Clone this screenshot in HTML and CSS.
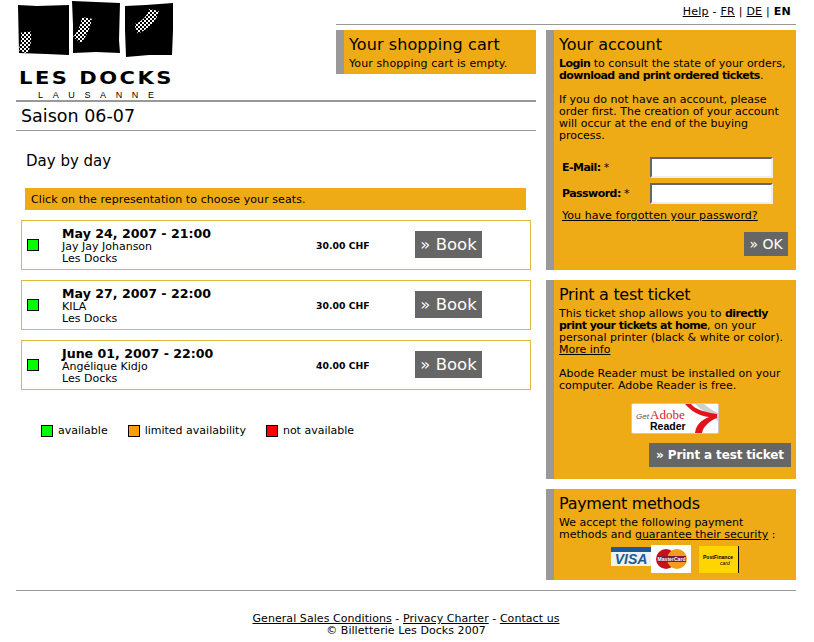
FILE: index.html
```html
<!DOCTYPE html>
<html lang="en">
<head>
  <meta charset="UTF-8" />
  <title>Billetterie Les Docks</title>
  <link rel="stylesheet" href="styles.css">
</head>
<body>
  <div class="page">
    <!-- Logo -->
    <a class="logo" href="#">
      <svg width="160" height="100" viewBox="0 0 160 100">
        <defs>
          <pattern id="dots" width="4" height="4" patternUnits="userSpaceOnUse">
            <rect width="2" height="2" fill="#fff" />
            <rect x="2" y="2" width="2" height="2" fill="#fff" />
          </pattern>
        </defs>
        <path d="M2 5 L21 6 L53 5 L53 55 L30 54 L3 53 Z" fill="#000" />
        <path d="M56 1 L80 2 L104 3 L103 40 L104 53 L80 52 L57 53 L57 25 Z" fill="#000" />
        <path d="M109 6 L130 5 L157 3 L157 30 L156 55 L133 55 L110 57 L109 30 Z" fill="#000" />
        <path d="M10 32 Q11 43 7 52" fill="none" stroke="url(#dots)" stroke-width="10" />
        <path d="M71 18 Q69 31 61 40" fill="none" stroke="url(#dots)" stroke-width="10" />
        <path d="M138 10 Q135 23 120 29" fill="none" stroke="url(#dots)" stroke-width="10" />
        <text x="3" y="84" class="logo-name" textLength="155" lengthAdjust="spacingAndGlyphs">LES DOCKS</text>
        <text x="22" y="98" class="logo-city" textLength="116">LAUSANNE</text>
      </svg>
    </a>

    <!-- Top links -->
    <div class="toplinks">
      <a href="#">Help</a> - <a href="#">FR</a> | <a href="#">DE</a> | <b>EN</b>
    </div>

    <!-- Shopping cart -->
    <div class="panel cart">
      <h2>Your shopping cart</h2>
      <p>Your shopping cart is empty.</p>
    </div>

    <!-- Main column -->
    <div class="main">
      <h1 class="season">Saison 06-07</h1>
      <h3 class="section-title">Day by day</h3>
      <div class="note">Click on the representation to choose your seats.</div>

      <div class="show">
        <span class="dot green"></span>
        <div class="show-info">
          <div class="show-date">May 24, 2007 - 21:00</div>
          Jay Jay Johanson<br>Les Docks
        </div>
        <div class="show-price">30.00 CHF</div>
        <a class="button book" href="#">» Book</a>
      </div>

      <div class="show">
        <span class="dot green"></span>
        <div class="show-info">
          <div class="show-date">May 27, 2007 - 22:00</div>
          KILA<br>Les Docks
        </div>
        <div class="show-price">30.00 CHF</div>
        <a class="button book" href="#">» Book</a>
      </div>

      <div class="show">
        <span class="dot green"></span>
        <div class="show-info">
          <div class="show-date">June 01, 2007 - 22:00</div>
          Angélique Kidjo<br>Les Docks
        </div>
        <div class="show-price">40.00 CHF</div>
        <a class="button book" href="#">» Book</a>
      </div>

      <div class="legend">
        <span class="dot green"></span><span class="legend-text">available</span>
        <span class="dot orange"></span><span class="legend-text">limited availability</span>
        <span class="dot red"></span><span class="legend-text">not available</span>
      </div>
    </div>

    <!-- Sidebar -->
    <div class="sidebar">
      <div class="panel account">
        <h2>Your account</h2>
        <p><b>Login</b> to consult the state of your orders, <b>download and print ordered tickets</b>.</p>
        <p class="gap">If you do not have an account, please order first. The creation of your account will occur at the end of the buying process.</p>
        <form class="login">
          <label for="email">E-Mail: <span>*</span></label>
          <input type="text" id="email">
          <label for="password">Password: <span>*</span></label>
          <input type="password" id="password">
        </form>
        <a class="forgot" href="#">You have forgotten your password?</a>
        <div class="actions ok-row"><a class="button ok" href="#">» OK</a></div>
      </div>

      <div class="panel print">
        <h2 class="tight">Print a test ticket</h2>
        <p>This ticket shop allows you to <b>directly print your tickets at home</b>, on your personal printer (black &amp; white or color). <a href="#">More info</a></p>
        <p class="gap">Abode Reader must be installed on your computer. Adobe Reader is free.</p>
        <div class="badge-row">
          <svg class="adobe" width="88" height="31" viewBox="0 0 88 31">
            <rect x="0.5" y="0.5" width="87" height="30" rx="1.5" fill="#fff" stroke="#c9c9c9" />
            <path d="M64 1 L73 1 C77 4 82 8 87 10 L87 19 L84 14 C77 11 70 7 64 1 Z" fill="#cfcfcf" />
            <path d="M54 1 L60 1 C64 6 72 9 86 11 L86 15 C78 18 72 24 71 30 L64 30 C65 22 70 17 78 14 C68 13 60 8 54 1 Z" fill="#e3131b" />
            <text x="5" y="16" class="adobe-get">Get</text>
            <text x="19" y="16" class="adobe-name">Adobe</text>
            <text x="19" y="27" class="adobe-reader">Reader</text>
          </svg>
        </div>
        <div class="actions"><a class="button test" href="#">» Print a test ticket</a></div>
      </div>

      <div class="panel payment">
        <h2 class="tight">Payment methods</h2>
        <p>We accept the following payment methods and <a href="#">guarantee their security</a> :</p>
        <div class="cards">
          <svg width="40" height="28" viewBox="0 0 40 28">
            <rect y="2" width="40" height="25" fill="#eef2f5" />
            <rect y="2" width="40" height="5" fill="#1a5a96" />
            <rect y="21" width="40" height="6" fill="#efab16" />
            <text x="20" y="19" class="visa">VISA</text>
          </svg>
          <svg width="40" height="28" viewBox="0 0 40 28">
            <rect width="40" height="28" fill="#fff" />
            <circle cx="15" cy="14" r="10" fill="#cc0f1a" />
            <circle cx="26" cy="14" r="10" fill="#f49d1c" />
            <rect x="6" y="11" width="29" height="6" fill="#7a1a40" />
            <text x="20.5" y="16.2" class="mc" textLength="28" lengthAdjust="spacingAndGlyphs">MasterCard</text>
          </svg>
          <svg class="postfinance" width="40" height="28" viewBox="0 0 40 28">
            <rect y="1" width="40" height="27" fill="#ffd500" />
            <rect x="39" y="1" width="1" height="27" fill="#000" />
            <text x="4" y="14" class="pf" textLength="30" lengthAdjust="spacingAndGlyphs">PostFinance</text>
            <text x="21" y="20" class="pf-small">card</text>
          </svg>
        </div>
      </div>
    </div>

    <!-- Footer -->
    <div class="footer">
      <a href="#">General Sales Conditions</a> - <a href="#">Privacy Charter</a> - <a href="#">Contact us</a><br>
      © Billetterie Les Docks 2007
    </div>
  </div>
</body>
</html>
```

FILE: styles.css
```css
body {
  margin: 0;
  background: #fff;
  font-family: "DejaVu Sans", Verdana, sans-serif;
  font-size: 11px;
  line-height: 12px;
  color: #000;
}

a {
  color: #000;
}

p {
  margin: 0;
}

.page {
  width: 780px;
  margin-left: 16px;
  display: grid;
  grid-template-columns: 320px 200px 260px;
  grid-template-rows: 25px 75px auto auto;
}

/* Header */
.logo {
  grid-column: 1;
  grid-row: 1 / 3;
  display: block;
  height: 100px;
}

.logo svg {
  display: block;
}

.logo-name {
  font-family: "DejaVu Sans", sans-serif;
  font-size: 17px;
  font-weight: bold;
  letter-spacing: 2px;
}

.logo-city {
  font-family: "Liberation Sans", sans-serif;
  font-size: 9px;
}

.toplinks {
  grid-column: 2 / 4;
  grid-row: 1;
  border-bottom: 1px solid #999;
  text-align: right;
  padding: 6px 5px 0 0;
  box-sizing: border-box;
  height: 25px;
  letter-spacing: 0.25px;
}

/* Orange panels */
.panel {
  background: #efab16;
  border-left: 8px solid #999;
  padding: 6px 5px 0;
  box-sizing: border-box;
}

.panel h2 {
  margin: 0 0 4px;
  font-size: 16px;
  font-weight: normal;
  line-height: 18px;
}

.panel h2.tight {
  letter-spacing: -0.3px;
}

.panel b,
.login label {
  letter-spacing: -0.55px;
}

.gap {
  margin-top: 12px;
}

.cart {
  grid-column: 2;
  grid-row: 2;
  margin-top: 5px;
  height: 44px;
  letter-spacing: 0.1px;
}

/* Main column */
.main {
  grid-column: 1 / 3;
  grid-row: 3;
}

.season {
  margin: 0;
  height: 28px;
  border-top: 2px solid #999;
  border-bottom: 1px solid #999;
  padding-left: 5px;
  font-size: 17.5px;
  font-weight: normal;
  line-height: 29px;
}

.section-title {
  margin: 21px 0 0 10px;
  font-size: 15px;
  font-weight: normal;
  line-height: 18px;
}

.note {
  margin: 18px 10px 0 9px;
  height: 22px;
  background: #efab16;
  padding-left: 6px;
  line-height: 23px;
  letter-spacing: 0.08px;
}

.show {
  margin: 10px 5px 0;
  height: 50px;
  box-sizing: border-box;
  border: 1px solid #e3b83f;
  padding-left: 5px;
  display: grid;
  grid-template-columns: 35px 254px 99px auto;
  align-items: center;
}

.dot {
  display: inline-block;
  width: 10px;
  height: 10px;
  border: 1px solid #000;
}

.green { background: #00ff00; }
.orange { background: #ff9c00; }
.red { background: #ff0000; }

.show-info {
  padding-top: 2px;
}

.show-date {
  font-size: 12.6px;
  font-weight: bold;
  line-height: 14px;
}

.show-price {
  padding-top: 1px;
  font-weight: bold;
  font-size: 9.3px;
}

.button {
  display: inline-block;
  background: #666;
  color: #fff;
  text-decoration: none;
  text-align: center;
}

.book {
  width: 67px;
  height: 27px;
  margin-bottom: 2px;
  font-size: 16.5px;
  line-height: 28px;
}

.legend {
  margin: 35px 0 0 25px;
  display: flex;
  align-items: center;
}

.legend-text {
  margin: 0 20px 0 5px;
}

/* Sidebar */
.sidebar {
  grid-column: 3;
  grid-row: 2 / 4;
  margin: 5px 0 0 10px;
  display: flex;
  flex-direction: column;
  gap: 10px;
}

.account { height: 240px; }
.print { height: 199px; }
.payment { height: 91px; }

.login {
  margin: 15px 0 0 3px;
  display: grid;
  grid-template-columns: 88px 123px;
  row-gap: 5px;
  align-items: center;
}

.login label {
  font-weight: bold;
}

.login label span {
  font-weight: normal;
}

.login input {
  width: 123px;
  height: 21px;
  box-sizing: border-box;
  border: 2px solid;
  border-color: #666 #eee #eee #666;
  background: #fff;
  padding: 0;
  margin: 0;
}

.forgot {
  display: block;
  margin: 6px 0 0 3px;
  letter-spacing: 0.06px;
}

.actions {
  display: flex;
  justify-content: flex-end;
}

.ok-row {
  margin: 10px 3px 0 0;
}

.ok {
  width: 44px;
  height: 24px;
  font-size: 14px;
  line-height: 24px;
}

.badge-row {
  margin-top: 11px;
  padding-left: 72px;
  height: 31px;
}

.adobe {
  display: block;
}

.adobe-get {
  font-family: "Liberation Sans", sans-serif;
  font-size: 8px;
  font-style: italic;
  fill: #555;
}

.adobe-name {
  font-family: "Liberation Serif", serif;
  font-size: 13px;
  fill: #d3232a;
}

.adobe-reader {
  font-family: "Liberation Sans", sans-serif;
  font-size: 10.5px;
  font-weight: bold;
}

.test {
  width: 142px;
  height: 24px;
  margin-top: 9px;
  font-size: 12px;
  font-weight: bold;
  line-height: 24px;
  letter-spacing: -0.15px;
}

.cards {
  margin: 4px 0 0 52px;
  display: flex;
}

.cards svg {
  display: block;
}

.postfinance {
  margin-left: 8px;
}

.visa {
  font-family: "Liberation Sans", sans-serif;
  font-size: 14px;
  font-weight: bold;
  font-style: italic;
  fill: #1a5a96;
  text-anchor: middle;
}

.mc {
  font-family: "Liberation Sans", sans-serif;
  font-size: 6px;
  font-weight: bold;
  fill: #fff;
  text-anchor: middle;
}

.pf {
  font-family: "Liberation Sans", sans-serif;
  font-size: 6px;
  font-weight: bold;
}

.pf-small {
  font-family: "Liberation Sans", sans-serif;
  font-size: 5px;
  font-style: italic;
}

/* Footer */
.footer {
  grid-column: 1 / 4;
  grid-row: 4;
  margin-top: 10px;
  border-top: 1px solid #999;
  padding-top: 22px;
  text-align: center;
  letter-spacing: 0.06px;
}
```
